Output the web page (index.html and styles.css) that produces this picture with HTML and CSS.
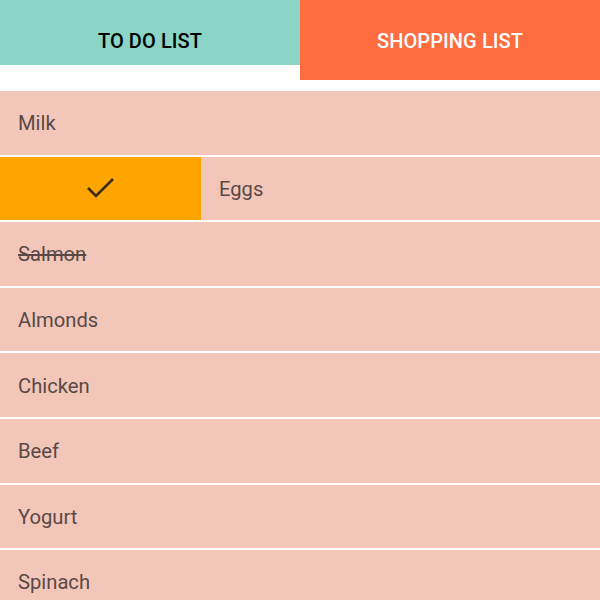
FILE: index.html
```html
<!DOCTYPE html>
<html>
<head>
<meta charset="utf-8">
<link rel="stylesheet" href="styles.css">
</head>
<body>
<div class="tabs">
  <div class="tab tab-todo">TO DO LIST</div>
  <div class="tab tab-shop">SHOPPING LIST</div>
</div>
<div class="list">
  <div class="row"><span class="label">Milk</span></div>
  <div class="row swiped">
    <div class="done">
      <svg width="30" height="22" viewBox="0 0 30 22"><polyline points="2,10 10,18 27,1" fill="none" stroke="#3b2c14" stroke-width="2.6"/></svg>
    </div>
    <span class="label">Eggs</span>
  </div>
  <div class="row"><span class="label struck">Salmon</span></div>
  <div class="row"><span class="label">Almonds</span></div>
  <div class="row"><span class="label">Chicken</span></div>
  <div class="row"><span class="label">Beef</span></div>
  <div class="row"><span class="label">Yogurt</span></div>
  <div class="row"><span class="label">Spinach</span></div>
</div>
</body>
</html>
```
FILE: styles.css
```css
html, body {
  margin: 0;
  padding: 0;
  background: #ffffff;
  overflow: hidden;
}
body {
  font-family: Roboto, "Liberation Sans", sans-serif;
  width: 600px;
  height: 600px;
}
.tabs {
  display: flex;
  align-items: flex-start;
}
.tab {
  flex: 1;
  display: flex;
  align-items: center;
  justify-content: center;
  font-size: 20px;
  font-weight: 500;
  letter-spacing: 0.1px;
}
.tab-todo {
  background: #8ad5c5;
  height: 65px;
  color: #000000;
  padding-top: 16px;
  box-sizing: border-box;
}
.tab-shop {
  background: #ff6c40;
  height: 80px;
  color: #ffffff;
  padding-top: 2px;
  box-sizing: border-box;
}
.list {
  margin-top: 11px;
  display: flex;
  flex-direction: column;
  gap: 2px;
}
.row {
  height: 63.6px;
  flex: none;
  background: #f2c7ba;
  display: flex;
  align-items: center;
}
.label {
  padding-left: 18px;
  padding-top: 1px;
  font-size: 20.2px;
  color: #5a4945;
}
.struck {
  text-decoration: line-through;
  text-decoration-thickness: 1.5px;
}
.done {
  width: 201px;
  height: 100%;
  background: #ffa500;
  display: flex;
  align-items: center;
  justify-content: center;
}
.done svg {
  display: block;
  margin-top: 2px;
}
```
